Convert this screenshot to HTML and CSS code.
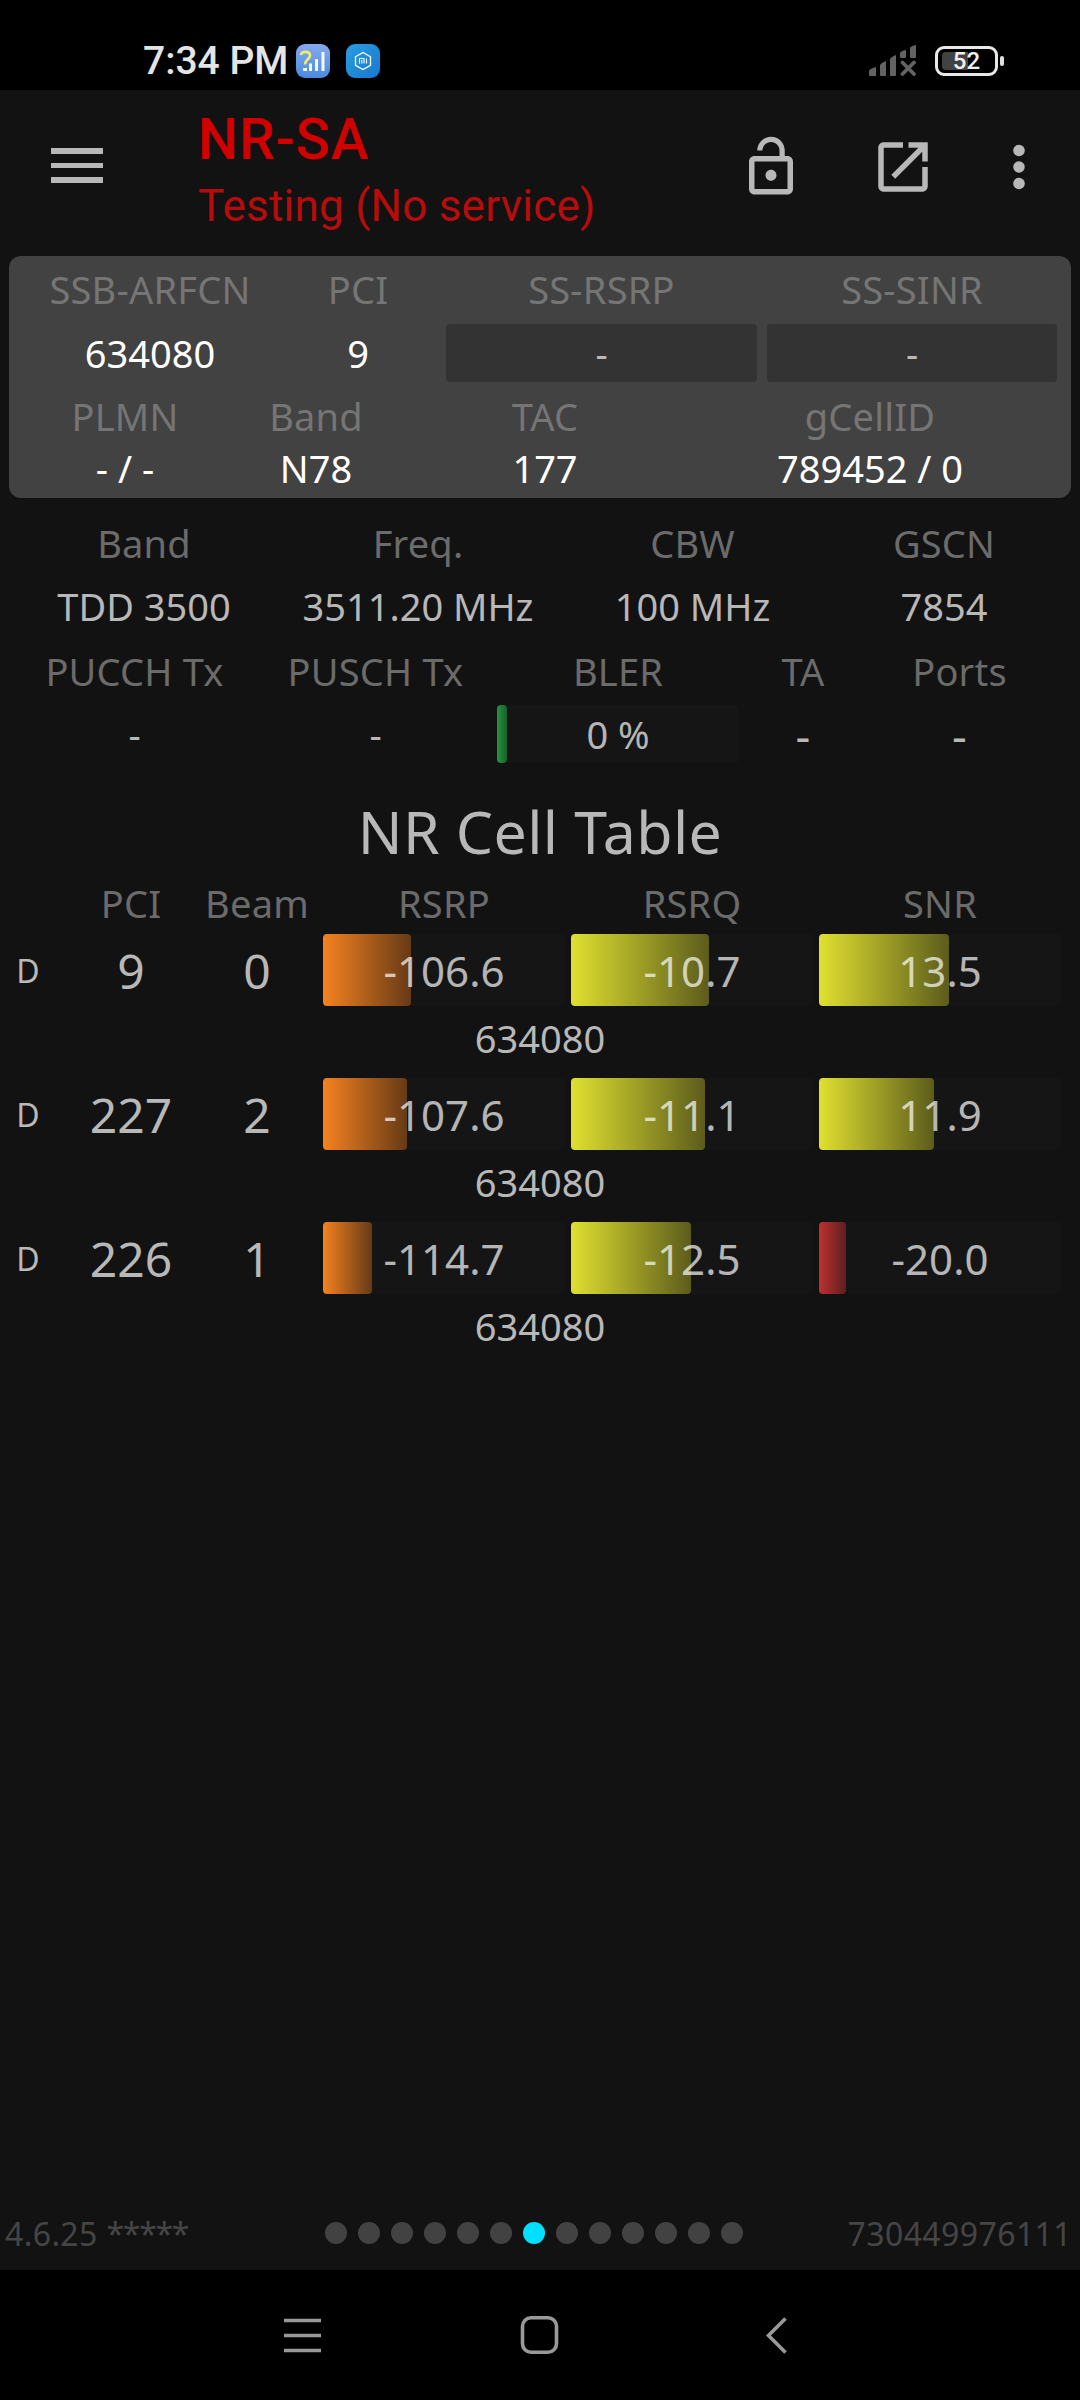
FILE: index.html
```html
<!DOCTYPE html>
<html lang="en">
  <head>
    <meta charset="UTF-8" />
    <meta name="viewport" content="width=device-width, initial-scale=1.0" />
    <title>NR Cell Table</title>
    <link rel="stylesheet" href="styles.css">
  </head>
  <body>
    <div class="status-bar">
      <span class="clock">7:34 PM</span>
      <svg class="app-icon" viewBox="0 0 34 34">
        <defs>
          <linearGradient id="signalBg" x1="0" y1="0" x2="0" y2="1">
            <stop offset="0" stop-color="#86a9ee" />
            <stop offset="1" stop-color="#4b8adf" />
          </linearGradient>
          <linearGradient id="miBg" x1="0" y1="0" x2="1" y2="1">
            <stop offset="0" stop-color="#2a9de0" />
            <stop offset="1" stop-color="#1878cf" />
          </linearGradient>
        </defs>
        <rect width="34" height="34" rx="9" fill="url(#signalBg)" />
        <path d="M5 11C5 7 14 6.500 14 11.500C14 15.500 9 15 9 20.500" fill="none" stroke="#eef06a" stroke-width="2.600" />
        <path d="M7 25.500h4M14.500 19.500V27M20.500 15v12M27 8v19" stroke="#f4f7fd" stroke-width="3" />
      </svg>
      <svg class="app-icon" viewBox="0 0 34 34">
        <rect width="34" height="34" rx="9" fill="url(#miBg)" />
        <path d="M17 8.500l7.500 4.300v8.500L17 25.600l-7.500-4.300v-8.500z" fill="none" stroke="#fff" stroke-width="1.300" />
        <path d="M13.500 19.500v-5h4.500v5M15.800 16v3.500M20.500 14.500v5" fill="none" stroke="#fff" stroke-width="1.100" />
      </svg>
      <div class="status-right">
        <svg class="cell-signal" viewBox="0 0 48 31">
          <g fill="#636363">
            <path d="M0 26q0-2 7-4v9H1q-1 0-1-1zM11 20q1-2 6-4v14q0 1-1 1h-4q-1 0-1-1zM21 14q1-2 6-4v20q0 1-1 1h-4q-1 0-1-1zM31 8q1-2 6-3v7q0 1-1 1h-4q-1 0-1-1zM41 3q1-2 6-3v12q0 1-1 1h-4q-1 0-1-1z" />
          </g>
          <path d="M33.500 17.500l11.500 11.500M45 17.500L33.500 29" stroke="#636363" stroke-width="3.800" stroke-linecap="round" />
        </svg>
        <div class="battery">
          <div class="battery-level"></div>
          <span class="battery-text">52</span>
        </div>
        <div class="battery-tip"></div>
      </div>
    </div>

    <header class="app-bar">
      <div class="hamburger">
        <span></span>
        <span></span>
        <span></span>
      </div>
      <div class="titles">
        <h1>NR-SA</h1>
        <p>Testing (No service)</p>
      </div>
      <svg class="icon" viewBox="0 0 24 24">
        <path d="M12 17c1.1 0 2-.9 2-2s-.9-2-2-2-2 .9-2 2 .9 2 2 2zm6-9h-1V6c0-2.760-2.240-5-5-5S7 3.240 7 6h1.900c0-1.710 1.390-3.100 3.100-3.100 1.710 0 3.100 1.390 3.100 3.100v2H6c-1.100 0-2 .9-2 2v10c0 1.100.9 2 2 2h12c1.100 0 2-.9 2-2V10c0-1.100-.9-2-2-2zm0 12H6V10h12v10z" />
      </svg>
      <svg class="icon icon-launch" viewBox="0 0 24 24">
        <path d="M19 19H5V5h7V3H5c-1.110 0-2 .9-2 2v14c0 1.100.890 2 2 2h14c1.100 0 2-.9 2-2v-7h-2v7zM14 3v2h3.590l-9.830 9.830 1.410 1.410L19 6.410V10h2V3h-7z" />
      </svg>
      <svg class="icon icon-more" viewBox="0 0 24 24">
        <circle cx="12" cy="6" r="2.100" />
        <circle cx="12" cy="12" r="2.100" />
        <circle cx="12" cy="18" r="2.100" />
      </svg>
    </header>

    <main>
      <section class="serving-cell">
        <div class="row primary label">
          <span>SSB-ARFCN</span>
          <span>PCI</span>
          <span>SS-RSRP</span>
          <span>SS-SINR</span>
        </div>
        <div class="row primary value">
          <span>634080</span>
          <span>9</span>
          <span><b class="box">-</b></span>
          <span><b class="box">-</b></span>
        </div>
        <div class="row identity label">
          <span>PLMN</span>
          <span>Band</span>
          <span>TAC</span>
          <span>gCellID</span>
        </div>
        <div class="row identity value">
          <span>- / -</span>
          <span>N78</span>
          <span>177</span>
          <span>789452 / 0</span>
        </div>
      </section>

      <section class="details">
        <div class="row carrier label">
          <span>Band</span>
          <span>Freq.</span>
          <span>CBW</span>
          <span>GSCN</span>
        </div>
        <div class="row carrier value">
          <span>TDD 3500</span>
          <span>3511.20 MHz</span>
          <span>100 MHz</span>
          <span>7854</span>
        </div>
        <div class="row uplink label">
          <span>PUCCH Tx</span>
          <span>PUSCH Tx</span>
          <span>BLER</span>
          <span>TA</span>
          <span>Ports</span>
        </div>
        <div class="row uplink value">
          <span>-</span>
          <span>-</span>
          <div class="meter bler"><div class="fill green" style="width: 10px"></div><span>0 %</span></div>
          <span class="large">-</span>
          <span class="large">-</span>
        </div>
      </section>

      <section class="cells">
        <h2>NR Cell Table</h2>
        <div class="cell-row cell-head label">
          <span></span>
          <span>PCI</span>
          <span>Beam</span>
          <span>RSRP</span>
          <span>RSRQ</span>
          <span>SNR</span>
        </div>

        <div class="cell-row">
          <span class="direction">D</span>
          <span class="number">9</span>
          <span class="number">0</span>
          <div class="meter"><div class="fill orange" style="width: 88px"></div><span>-106.6</span></div>
          <div class="meter"><div class="fill yellow" style="width: 138px"></div><span>-10.7</span></div>
          <div class="meter"><div class="fill yellow" style="width: 130px"></div><span>13.5</span></div>
        </div>
        <div class="arfcn">634080</div>

        <div class="cell-row">
          <span class="direction">D</span>
          <span class="number">227</span>
          <span class="number">2</span>
          <div class="meter"><div class="fill orange" style="width: 84px"></div><span>-107.6</span></div>
          <div class="meter"><div class="fill yellow" style="width: 134px"></div><span>-11.1</span></div>
          <div class="meter"><div class="fill yellow" style="width: 115px"></div><span>11.9</span></div>
        </div>
        <div class="arfcn">634080</div>

        <div class="cell-row">
          <span class="direction">D</span>
          <span class="number">226</span>
          <span class="number">1</span>
          <div class="meter"><div class="fill orange" style="width: 49px"></div><span>-114.7</span></div>
          <div class="meter"><div class="fill yellow" style="width: 120px"></div><span>-12.5</span></div>
          <div class="meter"><div class="fill red" style="width: 27px"></div><span>-20.0</span></div>
        </div>
        <div class="arfcn">634080</div>
      </section>
    </main>

    <footer class="pager">
      <span class="version">4.6.25 <span class="masked">*****</span></span>
      <div class="dots">
        <i></i><i></i><i></i><i></i><i></i><i></i><i class="active"></i><i></i><i></i><i></i><i></i><i></i><i></i>
      </div>
      <span class="device-id">730449976111</span>
    </footer>

    <nav class="nav-bar">
      <svg viewBox="0 0 40 40">
        <path d="M1 5.500h37M1 20.500h37M1 35.500h37" />
      </svg>
      <svg viewBox="0 0 40 40">
        <rect x="2.500" y="2.800" width="34" height="34.500" rx="8.500" />
      </svg>
      <svg viewBox="0 0 40 40">
        <path d="M28.500 3.500L11.500 20.500L28.500 37.500" />
      </svg>
    </nav>
  </body>
</html>
```
FILE: styles.css
```css
* {
  box-sizing: border-box;
}

body {
  font-family: "Noto Sans", "Open Sans", sans-serif;
  font-size: 38px;
  background-color: #121212;
  color: #b8b8b8;
  margin: 0;
  height: 2400px;
  display: flex;
  flex-direction: column;
  overflow: hidden;
}

.status-bar {
  height: 90px;
  background-color: #000;
  display: flex;
  align-items: center;
  padding: 31px 76px 0 143px;
}

.clock {
  font-family: Roboto, sans-serif;
  font-size: 39px;
  font-weight: 500;
  color: #e4e4e4;
  width: 153px;
  white-space: nowrap;
}

.app-icon {
  width: 34px;
  height: 34px;
  margin-right: 16px;
}

.status-right {
  margin-left: auto;
  display: flex;
  align-items: center;
}

.cell-signal {
  width: 48px;
  height: 31px;
  margin-right: 18px;
}

.battery {
  width: 63px;
  height: 30px;
  border: 3px solid #e8e8e8;
  border-radius: 9px;
  padding: 3px 4px;
  position: relative;
}

.battery-level {
  width: 26px;
  height: 18px;
  border-radius: 4px 0 0 4px;
  background-color: #424242;
}

.battery-text {
  position: absolute;
  inset: 0;
  font-family: Roboto, sans-serif;
  font-size: 24px;
  font-weight: 500;
  line-height: 25px;
  color: #f0f0f0;
  text-align: center;
}

.battery-tip {
  width: 4px;
  height: 10px;
  margin-left: 2px;
  border-radius: 2px;
  background-color: #e0e0e0;
}

.app-bar {
  height: 166px;
  display: flex;
  align-items: flex-start;
  padding: 0 28px 0 51px;
  font-family: Roboto, sans-serif;
}

.hamburger {
  width: 52px;
  margin-top: 58px;
  display: flex;
  flex-direction: column;
  gap: 9px;
}

.hamburger span {
  height: 5.600px;
  background-color: #b8b8b8;
}

.titles {
  flex: 1;
  margin-left: 95px;
  padding-top: 15px;
}

.titles h1 {
  margin: 0;
  font-size: 57px;
  font-weight: 500;
  line-height: 70px;
  letter-spacing: 0.7px;
  color: #d00000;
}

.titles p {
  margin: 0;
  font-size: 44px;
  line-height: 62px;
  letter-spacing: 0.25px;
  color: #b80c0c;
}

.icon {
  width: 66px;
  height: 66px;
  margin-top: 44px;
  fill: #b8b8b8;
}

.icon-launch {
  margin-left: 66px;
}

.icon-more {
  margin-left: 50px;
}

.serving-cell {
  height: 242px;
  margin: 0 9px;
  border-radius: 12px;
  background-color: #424242;
}

.row {
  display: grid;
  text-align: center;
  white-space: nowrap;
}

.label {
  color: #6b6b6b;
  letter-spacing: 0.2px;
}

.serving-cell .label {
  color: #757575;
}

.serving-cell .value {
  color: #fff;
}

.primary {
  grid-template-columns: 282px 155px 321px 290px;
}

.primary.label {
  height: 68px;
  line-height: 66px;
}

.primary span:nth-child(2) {
  padding-right: 21px;
}

.primary span:nth-child(3) {
  padding-right: 10px;
}

.primary.value {
  height: 58px;
  line-height: 58px;
}

.box {
  display: block;
  height: 58px;
  border-radius: 4px;
  background-color: #333;
  color: #b8b8b8;
  font-weight: 400;
}

.identity {
  grid-template-columns: 232px 150px 308px 342px;
}

.identity.label {
  height: 70px;
  line-height: 68px;
}

.identity.value {
  line-height: 33px;
}

.details {
  margin-top: 14px;
}

.carrier {
  grid-template-columns: 288px 260px 289px 214px;
  line-height: 63px;
}

.uplink {
  grid-template-columns: 269px 213px 272px 98px 215px;
  line-height: 67px;
}

.uplink.label {
  height: 67px;
  line-height: 66px;
}

.uplink.value {
  height: 58px;
  line-height: 58px;
}

.meter {
  position: relative;
  height: 72px;
  width: 242px;
  border-radius: 4px;
  background-color: #151515;
  color: rgba(255, 255, 255, 0.7);
  font-size: 42px;
  line-height: 73px;
  text-align: center;
}

.meter span {
  position: relative;
}

.fill {
  position: absolute;
  left: 0;
  top: 0;
  height: 100%;
  border-radius: 4px;
}

.orange {
  background: linear-gradient(to right, #f58220, #663a16);
}

.yellow {
  background: linear-gradient(to right, #e0e030, #5c5c1c);
}

.red {
  background: linear-gradient(to right, #c03030, #5c1f1f);
}

.green {
  background: linear-gradient(to right, #259540, #17602a);
}

.bler {
  height: 58px;
  margin-left: 15px;
  font-size: 38px;
  line-height: 58px;
}

.large {
  font-size: 46px;
}

.cells h2 {
  margin: 0;
  padding-top: 25px;
  height: 110px;
  font-size: 59px;
  font-weight: 400;
  letter-spacing: 0.4px;
  line-height: 86px;
  text-align: center;
}

.cell-row {
  display: grid;
  grid-template-columns: 65px 120px 120px 242px 242px 242px;
  column-gap: 6px;
  height: 72px;
  line-height: 73px;
  text-align: center;
}

.cell-head {
  height: 61px;
  line-height: 61px;
}

.direction {
  padding-right: 9px;
  font-size: 32px;
}

.number {
  font-size: 48px;
}

.arfcn {
  height: 72px;
  line-height: 65px;
  text-align: center;
}

.pager {
  margin-top: auto;
  height: 74px;
  display: grid;
  grid-template-columns: 320px 418px 1fr;
  align-items: center;
  padding: 0 8px 0 5px;
  color: #454545;
  font-size: 32px;
}

.version,
.device-id {
  letter-spacing: 0.4px;
}

.masked {
  letter-spacing: -1.300px;
}

.dots {
  display: flex;
  gap: 11px;
}

.dots i {
  width: 22px;
  height: 22px;
  border-radius: 50%;
  background-color: #424242;
}

.dots .active {
  background-color: #00dfff;
}

.device-id {
  text-align: right;
}

.nav-bar {
  height: 130px;
  background-color: #000;
  display: flex;
  justify-content: center;
  gap: 197px;
  padding-top: 45px;
}

.nav-bar svg {
  width: 40px;
  height: 40px;
  fill: none;
  stroke: #999;
  stroke-width: 3.600px;
}
```
